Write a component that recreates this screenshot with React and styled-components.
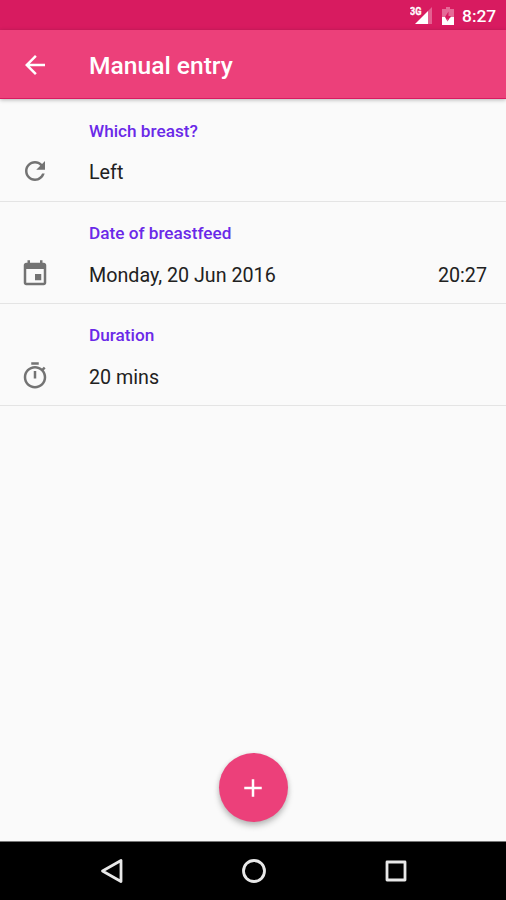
import styled, { createGlobalStyle } from "styled-components";

const GlobalStyle = createGlobalStyle`
	* {
		box-sizing: border-box;
	}
	body {
		margin: 0;
		background: #fafafa;
		font-family: Roboto, sans-serif;
	}
`;

const Screen = styled.div`
	display: flex;
	flex-direction: column;
	width: 506px;
	height: 900px;
	overflow: hidden;
	background: #fafafa;
`;

const StatusBar = styled.header`
	display: flex;
	align-items: center;
	justify-content: flex-end;
	flex: none;
	height: 30px;
	padding: 2px 9px 0 0;
	background: #d81b60;
	color: #fff;
	svg {
		display: block;
	}
`;

const StatusIcons = styled.div`
	display: flex;
	align-items: center;
	gap: 9px;
`;

const Clock = styled.span`
	width: 35px;
	margin-left: 8px;
	font-size: 17.4px;
	font-weight: 500;
	line-height: 20px;
	white-space: nowrap;
`;

const Toolbar = styled.nav`
	display: flex;
	align-items: center;
	flex: none;
	height: 69px;
	padding: 1px 0 0 20px;
	background: #ec407a;
	border-bottom: 1px solid #d81b60;
	box-shadow: 0 1px 4px rgba(0, 0, 0, 0.28);
	color: #fff;
	h1 {
		margin: 2px 0 0 39px;
		font-size: 24.6px;
		font-weight: 500;
		line-height: 30px;
	}
`;

const Icon = styled.svg`
	display: block;
	flex: none;
	width: 30px;
	height: 30px;
	fill: currentColor;
`;

const Entries = styled.main`
	flex: 1;
`;

const Label = styled.h2`
	margin: 0 0 0 69px;
	color: #6a29e8;
	font-size: 17.2px;
	font-weight: 500;
	line-height: 20px;
`;

const Field = styled.div`
	display: flex;
	align-items: center;
	height: 30px;
	margin-top: 17px;
	color: #212121;
	font-size: 19.7px;
	${Icon} {
		margin: 0 39px 2px 0;
		color: #737373;
	}
	span {
		line-height: 24px;
		padding-top: 1px;
	}
	span + span {
		margin-left: auto;
	}
`;

const Entry = styled.section`
	height: 102px;
	padding: 21px 19px 0 20px;
	border-bottom: 1px solid #e4e4e4;
	&:first-child {
		height: 103px;
		padding-top: 22px;
		${Field} {
			margin-top: 16px;
		}
	}
`;

const Footer = styled.div`
	display: flex;
	justify-content: center;
	flex: none;
	height: 88px;
`;

const AddButton = styled.button`
	display: grid;
	place-items: center;
	width: 69px;
	height: 69px;
	padding: 0;
	border: 0;
	border-radius: 50%;
	background: #ec407a;
	box-shadow: 0 4px 6px rgba(0, 0, 0, 0.22), 0 1px 5px rgba(0, 0, 0, 0.1);
	color: #fff;
`;

const SystemBar = styled.footer`
	display: grid;
	grid-template-columns: repeat(3, 142px);
	justify-content: center;
	justify-items: center;
	align-items: center;
	flex: none;
	height: 59px;
	padding-left: 2px;
	border-top: 1px solid #777;
	background: #000;
	svg {
		display: block;
		fill: none;
		stroke: #e8e8e8;
		stroke-width: 2.8;
		stroke-linejoin: round;
	}
`;

const paths = {
	back: "M20 11H7.83l5.59-5.59L12 4l-8 8 8 8 1.41-1.41L7.83 13H20v-2z",
	refresh: "M17.65 6.35C16.2 4.9 14.21 4 12 4c-4.42 0-7.99 3.58-7.99 8s3.57 8 7.99 8c3.73 0 6.84-2.55 7.73-6h-2.08c-.82 2.33-3.04 4-5.65 4-3.31 0-6-2.69-6-6s2.69-6 6-6c1.66 0 3.14.69 4.22 1.78L13 11h7V4l-2.35 2.35z",
	event: "M17 12h-5v5h5v-5zM16 1v2H8V1H6v2H5c-1.11 0-1.99.9-1.99 2L3 19c0 1.1.89 2 2 2h14c1.1 0 2-.9 2-2V5c0-1.1-.9-2-2-2h-1V1h-2zm3 18H5V8h14v11z",
	timer: "M15 1H9v2h6V1zm-4 13h2V8h-2v6zm8.03-6.61l1.42-1.42c-.43-.51-.9-.99-1.41-1.41l-1.42 1.42C16.07 4.74 14.12 4 12 4c-4.97 0-9 4.03-9 9s4.02 9 9 9 9-4.03 9-9c0-2.12-.74-4.07-1.97-5.61zM12 20c-3.87 0-7-3.13-7-7s3.13-7 7-7 7 3.13 7 7-3.13 7-7 7z",
	add: "M19 13h-6v6h-2v-6H5v-2h6V5h2v6h6v2z",
};

const MaterialIcon = ({ name }) => (
	<Icon viewBox="0 0 24 24">
		<path d={paths[name]} />
	</Icon>
);

const entries = [
	{ icon: "refresh", label: "Which breast?", value: "Left" },
	{ icon: "event", label: "Date of breastfeed", value: "Monday, 20 Jun 2016", time: "20:27" },
	{ icon: "timer", label: "Duration", value: "20 mins" },
];

const SignalBars = () => (
	<svg width="23" height="22" viewBox="0 0 23 22">
		<path d="M22 2v17h-4V6z" fill="#fff" fillOpacity=".3" />
		<path d="M18 6v13H5z" fill="#fff" />
		<text x="0" y="9.500" fill="#fff" stroke="#fff" strokeWidth=".3" fontSize="10" fontWeight="700" textLength="11.500" lengthAdjust="spacingAndGlyphs">
			3G
		</text>
	</svg>
);

const Battery = () => (
	<svg width="12" height="18" viewBox="0 0 12 18">
		<path d="M4 0h4v2h4v8H0V2h4z" fill="#fff" fillOpacity=".35" />
		<path d="M0 10h3l2.500 4.500V12L9 10h3v8H0z" fill="#fff" />
		<path d="M3 10h2.500v4.500L9 9H6.500V4.500z" fill="#d81b60" />
	</svg>
);

const App = () => {
	return (
		<Screen>
			<GlobalStyle />
			<StatusBar>
				<StatusIcons>
					<SignalBars />
					<Battery />
				</StatusIcons>
				<Clock>8:27</Clock>
			</StatusBar>
			<Toolbar>
				<MaterialIcon name="back" />
				<h1>Manual entry</h1>
			</Toolbar>
			<Entries>
				{entries.map(({ icon, label, value, time }) => (
					<Entry key={label}>
						<Label>{label}</Label>
						<Field>
							<MaterialIcon name={icon} />
							<span>{value}</span>
							{time && <span>{time}</span>}
						</Field>
					</Entry>
				))}
			</Entries>
			<Footer>
				<AddButton aria-label="Add">
					<MaterialIcon name="add" />
				</AddButton>
			</Footer>
			<SystemBar>
				<svg width="24" height="26" viewBox="0 0 24 26">
					<path d="M21 2.500v21L2.500 13z" />
				</svg>
				<svg width="26" height="26" viewBox="0 0 26 26">
					<circle cx="13" cy="13" r="10.500" />
				</svg>
				<svg width="24" height="24" viewBox="0 0 24 24">
					<rect x="3" y="3" width="18" height="18" />
				</svg>
			</SystemBar>
		</Screen>
	);
};
export default App;
